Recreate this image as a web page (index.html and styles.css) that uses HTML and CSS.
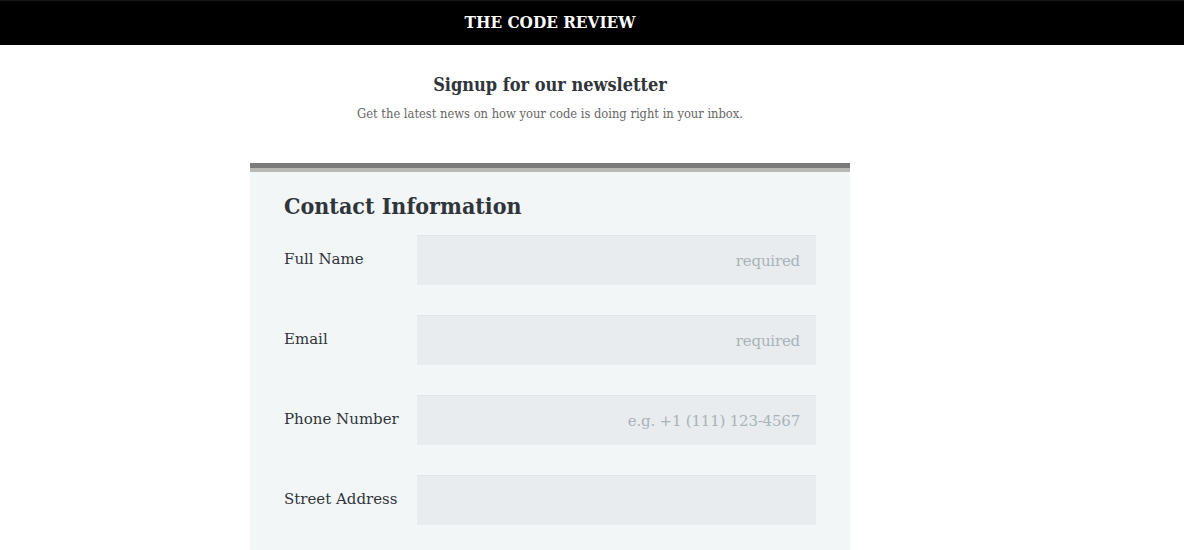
FILE: index.html
```
<!DOCTYPE html>
<html>
<head>
<meta charset="utf-8">
<link rel="stylesheet" href="styles.css">
</head>
<body>
<header class="topbar">
  <div class="wrap"><h1 class="brand">THE CODE REVIEW</h1></div>
</header>
<main class="wrap">
  <section class="intro">
    <h2 class="intro-title">Signup for our newsletter</h2>
    <p class="intro-text">Get the latest news on how your code is doing right in your inbox.</p>
  </section>
  <form class="card">
    <h3 class="card-title">Contact Information</h3>
    <div class="row">
      <label class="label">Full Name</label>
      <input class="field" type="text" placeholder="required">
    </div>
    <div class="row">
      <label class="label">Email</label>
      <input class="field" type="text" placeholder="required">
    </div>
    <div class="row">
      <label class="label">Phone Number</label>
      <input class="field" type="text" placeholder="e.g. +1 (111) 123-4567">
    </div>
    <div class="row">
      <label class="label">Street Address</label>
      <input class="field" type="text" placeholder="">
    </div>
  </form>
</main>
</body>
</html>
```
FILE: styles.css
```
* { box-sizing: border-box; }
body {
  margin: 0;
  font-family: "DejaVu Serif", serif;
  color: #2f353a;
  background: #fff;
}
.wrap {
  width: 600px;
  margin-left: 250px;
}
.topbar {
  background: #000;
  border-top: 1px solid #161616;
  height: 45px;
}
.brand {
  margin: 0;
  text-align: center;
  color: #fff;
  font-family: "DejaVu Serif Condensed", "DejaVu Serif", serif;
  font-size: 17px;
  font-weight: bold;
  line-height: 43px;
}
.intro {
  text-align: center;
  padding-top: 28px;
}
.intro-title {
  margin: 0;
  font-family: "DejaVu Serif Condensed", "DejaVu Serif", serif;
  font-size: 18px;
  font-weight: bold;
  line-height: 24px;
  color: #2f353a;
}
.intro-text {
  margin: 8px 0 0;
  font-family: "DejaVu Serif Condensed", "DejaVu Serif", serif;
  font-size: 12.8px;
  line-height: 18px;
  color: #666;
}
.card {
  margin-top: 40px;
  background: #f3f6f7;
  border-top: 5px solid #7b7b7b;
  padding: 4px 34px 25px;
}
.card::before {
  content: "";
  display: block;
  height: 4px;
  background: #b8b8b5;
  margin: -4px -34px 0;
}
.card-title {
  margin: 19px 0 14px;
  font-family: "DejaVu Serif Condensed", "DejaVu Serif", serif;
  font-size: 23px;
  font-weight: bold;
  line-height: 30px;
  color: #2f353a;
}
.row {
  display: flex;
  align-items: center;
  margin-bottom: 30px;
}
.row:last-child { margin-bottom: 0; }
.label {
  width: 133px;
  font-size: 15px;
  line-height: 20px;
  padding-bottom: 2px;
  color: #2f353a;
}
.field {
  flex: 1;
  height: 50px;
  border: none;
  border-top: 1px solid #e0e4e6;
  background: #e8ecee;
  font-family: inherit;
  font-size: 15px;
  text-align: right;
  padding: 0 16px 0 10px;
  color: #2f353a;
}
.field::placeholder { color: #aab3b9; letter-spacing: -0.2px; }
```
